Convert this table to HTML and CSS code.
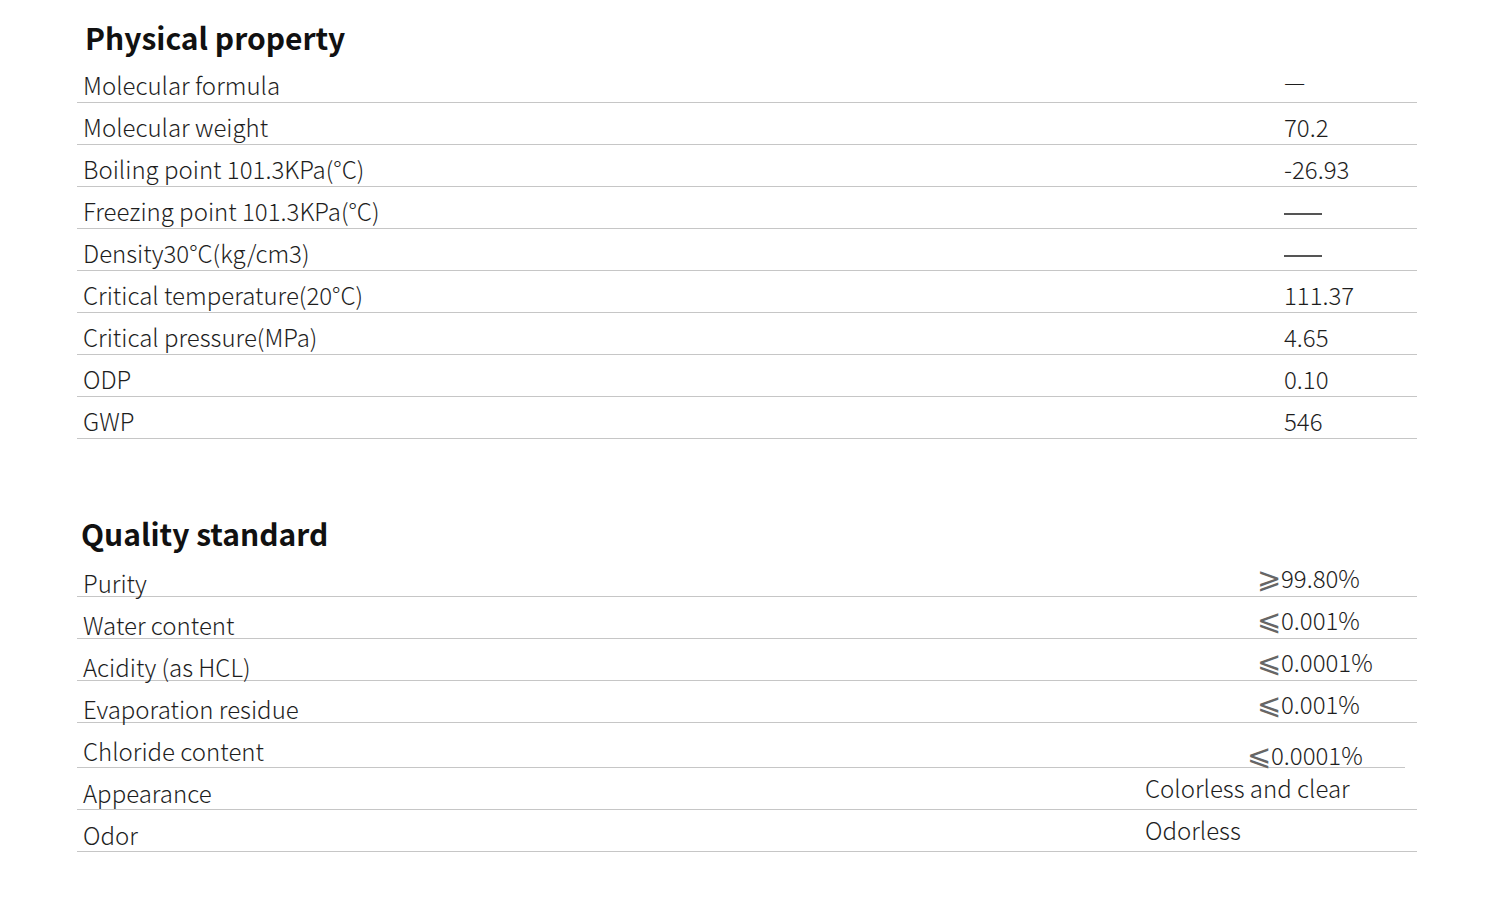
FILE: index.html
```html
<!DOCTYPE html>
<html lang="en">
<head>
<meta charset="utf-8">
<title>Properties</title>
<link rel="stylesheet" href="styles.css">
</head>
<body>
<div class="page">
  <section class="section">
    <h2 class="title title-physical">Physical property</h2>
    <div class="row"><span class="label">Molecular formula</span><span class="value value-em">—</span></div>
    <div class="row"><span class="label">Molecular weight</span><span class="value">70.2</span></div>
    <div class="row"><span class="label">Boiling point 101.3KPa(°C)</span><span class="value">-26.93</span></div>
    <div class="row"><span class="label">Freezing point 101.3KPa(°C)</span><span class="value"><span class="dash"></span></span></div>
    <div class="row"><span class="label">Density30°C(kg/cm3)</span><span class="value"><span class="dash"></span></span></div>
    <div class="row"><span class="label">Critical temperature(20°C)</span><span class="value">111.37</span></div>
    <div class="row"><span class="label">Critical pressure(MPa)</span><span class="value">4.65</span></div>
    <div class="row"><span class="label">ODP</span><span class="value">0.10</span></div>
    <div class="row"><span class="label">GWP</span><span class="value">546</span></div>
  </section>
  <section class="section">
    <h2 class="title title-quality">Quality standard</h2>
    <div class="row qrow"><span class="label">Purity</span><span class="value qv"><span class="sym">⩾</span>99.80%</span></div>
    <div class="row qrow"><span class="label">Water content</span><span class="value qv"><span class="sym">⩽</span>0.001%</span></div>
    <div class="row qrow"><span class="label">Acidity (as HCL)</span><span class="value qv"><span class="sym">⩽</span>0.0001%</span></div>
    <div class="row qrow"><span class="label">Evaporation residue</span><span class="value qv"><span class="sym">⩽</span>0.001%</span></div>
    <div class="row qrow row-chloride"><span class="label">Chloride content</span><span class="value qv-chloride"><span class="sym">⩽</span>0.0001%</span></div>
    <div class="row qrow row-text"><span class="label">Appearance</span><span class="value qv-text">Colorless and clear</span></div>
    <div class="row qrow row-text"><span class="label">Odor</span><span class="value qv-text">Odorless</span></div>
  </section>
</div>
</body>
</html>
```
FILE: styles.css
```css
html, body {
  margin: 0;
  padding: 0;
  background: #ffffff;
}
body {
  font-family: "Noto Sans CJK SC", "Noto Sans", sans-serif;
  color: #1e1e1e;
}
.page {
  width: 1340px;
  margin-left: 77px;
}
.title {
  margin: 0;
  font-size: 30px;
  font-weight: 700;
  line-height: 40px;
  color: #111111;
}
.title-physical {
  padding: 17px 0 4px 8px;
}
.title-quality {
  padding: 74px 0 2px 4px;
}
.row {
  display: flex;
  align-items: flex-start;
  height: 41px;
  border-bottom: 1px solid #c6c6c6;
  font-size: 24px;
  font-weight: 300;
  line-height: 30px;
}
.label {
  flex: 0 0 1201px;
  padding-left: 6px;
  padding-top: 9px;
}
.value {
  padding-top: 9px;
}
.value-em {
  padding-top: 5px;
}
.dash {
  display: inline-block;
  width: 38px;
  height: 2px;
  background: #555555;
  vertical-align: middle;
}
.sym {
  font-family: "DejaVu Sans ExtraLight", "DejaVu Sans", sans-serif;
  font-weight: 200;
  font-size: 29px;
  line-height: 30px;
  display: inline-block;
  width: 24px;
  margin-left: -1px;
  vertical-align: top;
  color: #666666;
}
.qrow .label {
  flex-basis: 1175px;
  padding-top: 13px;
}
.qv {
  padding-top: 8px;
}
.row-chloride {
  height: 44px;
  margin-right: 12px;
}
.row-chloride .label {
  flex-basis: 1165px;
}
.qv-chloride {
  padding-top: 17px;
}
.row-text .label {
  flex-basis: 1062px;
  padding-top: 10px;
}
.qv-text {
  padding-top: 5px;
}
```
